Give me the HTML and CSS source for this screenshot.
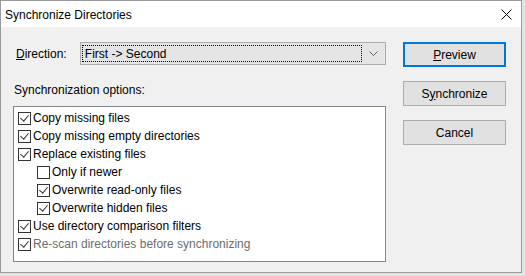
FILE: index.html
```html
<!DOCTYPE html>
<html lang="en">
<head>
    <meta charset="UTF-8">
    <title>Synchronize Directories</title>
    <link rel="stylesheet" href="styles.css">
</head>
<body>
    <div class="window">
        <div class="titlebar">
            <span class="title">Synchronize Directories</span>
            <svg class="close" width="11" height="11" viewBox="0 0 11 11">
                <path d="M0.5 0.5 L10.5 10.5 M10.5 0.5 L0.5 10.5" stroke="#000" stroke-width="1" fill="none"/>
            </svg>
        </div>

        <div class="dialog">
            <div class="main">
                <div class="direction-row">
                    <label class="direction-label"><u>D</u>irection:</label>
                    <div class="combo">
                        <span class="combo-value">First -&gt; Second</span>
                        <svg class="chevron" width="9" height="5" viewBox="0 0 9 5">
                            <path d="M0.5 0.5 L4.5 4.5 L8.5 0.5" stroke="#606060" fill="none"/>
                        </svg>
                    </div>
                </div>

                <div class="options-label">Synchronization options:</div>
                <ul class="options">
                    <li class="opt"><span class="box on"></span>Copy missing files</li>
                    <li class="opt"><span class="box on"></span>Copy missing empty directories</li>
                    <li class="opt"><span class="box on"></span>Replace existing files</li>
                    <li class="opt sub"><span class="box"></span>Only if newer</li>
                    <li class="opt sub"><span class="box on"></span>Overwrite read-only files</li>
                    <li class="opt sub"><span class="box on"></span>Overwrite hidden files</li>
                    <li class="opt"><span class="box on"></span>Use directory comparison filters</li>
                    <li class="opt disabled"><span class="box on"></span>Re-scan directories before synchronizing</li>
                </ul>
            </div>

            <div class="buttons">
                <button class="btn default"><u>P</u>review</button>
                <button class="btn">S<u>y</u>nchronize</button>
                <button class="btn">Cancel</button>
            </div>
        </div>
    </div>
</body>
</html>
```

FILE: styles.css
```css
body {
    margin: 0;
    background: #e4e4e4;
    font-family: "Liberation Sans", Arial, sans-serif;
    font-size: 12px;
    color: #000;
}
.window {
    width: 520px;
    height: 271px;
    border: 1px solid #9a9a9a;
    background: #f0f0f0;
    display: flex;
    flex-direction: column;
}
.titlebar {
    height: 26px;
    background: #fff;
    display: flex;
    align-items: center;
    justify-content: space-between;
    padding: 0 9px 0 4px;
    flex-shrink: 0;
}
.title {
    padding-top: 2px;
}
.close {
    margin-top: 1px;
}
.dialog {
    display: flex;
    padding: 15px 0 0 12px;
    gap: 17px;
}
.main {
    width: 373px;
}
.direction-row {
    display: flex;
    align-items: center;
}
.direction-label {
    width: 64px;
    padding-left: 3px;
}
.combo {
    width: 304px;
    height: 21px;
    border: 1px solid #adadad;
    background: #e5e5e5;
    display: flex;
    align-items: center;
    padding-left: 1px;
}
.combo-value {
    width: 280px;
    height: 17px;
    line-height: 17px;
    padding-left: 2px;
    border: 1px dotted #000;
    box-sizing: border-box;
}
.chevron {
    margin-left: 7px;
}
.options-label {
    margin-top: 18px;
    line-height: 15px;
    padding-left: 1px;
}
.options {
    list-style: none;
    margin: 8px 0 0;
    padding: 2px 0 0 4px;
    height: 152px;
    border: 1px solid #828790;
    background: #fff;
}
.opt {
    height: 18px;
    display: flex;
    align-items: center;
}
.opt.sub {
    padding-left: 19px;
}
.opt.disabled {
    color: #6d6d6d;
}
.box {
    width: 11px;
    height: 11px;
    border: 1px solid #333;
    background: #fff;
    margin-right: 2px;
    flex-shrink: 0;
    position: relative;
}
.box.on::after {
    content: "";
    position: absolute;
    left: 3px;
    top: 0;
    width: 4px;
    height: 7px;
    border: solid #333;
    border-width: 0 1px 1px 0;
    transform: rotate(40deg);
}
.buttons {
    display: flex;
    flex-direction: column;
    gap: 14px;
}
.btn {
    width: 103px;
    height: 25px;
    background: #e1e1e1;
    border: 1px solid #adadad;
    font-family: inherit;
    font-size: 12px;
    color: #000;
    padding: 0;
}
.btn.default {
    border: 2px solid #0078d7;
}
```
